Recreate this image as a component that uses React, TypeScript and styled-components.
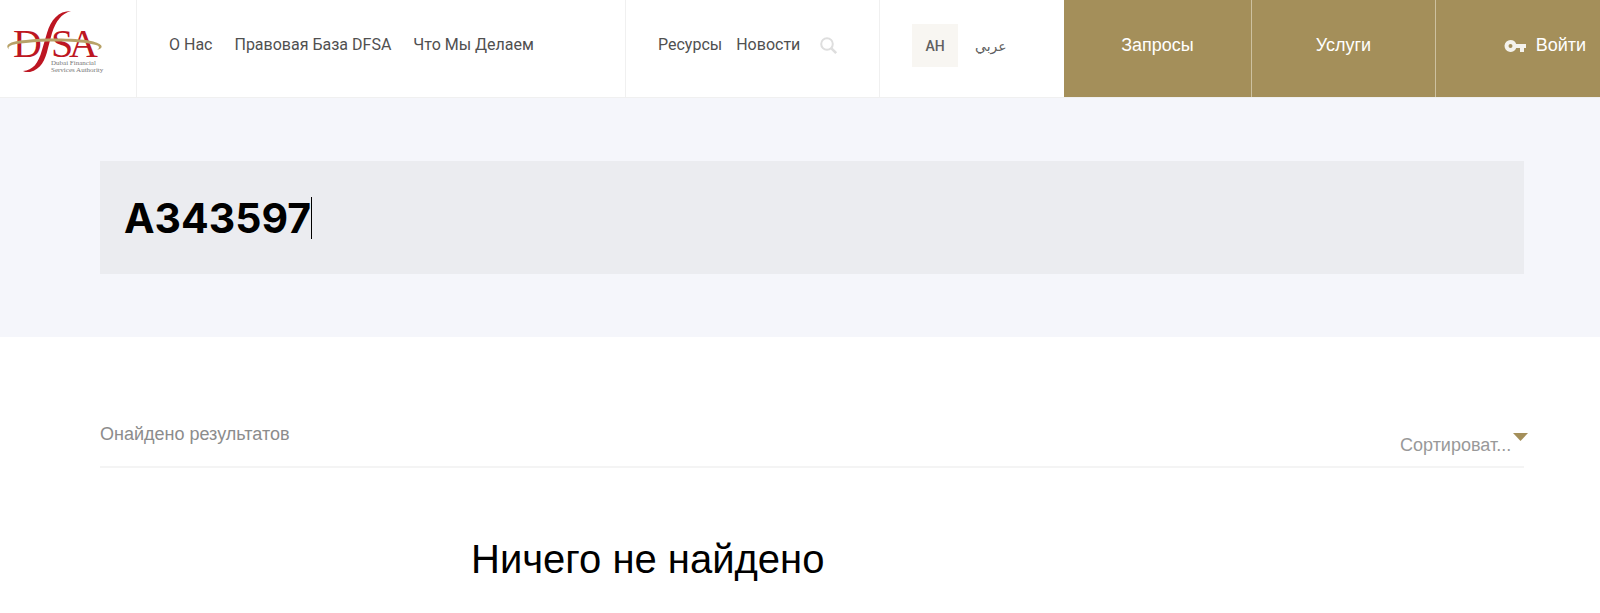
import React from "react";
import styled, { createGlobalStyle } from "styled-components";

const gold = "#a48f5a";
const line = "#f0f0f0";

const GlobalStyle = createGlobalStyle`
  *, *::before, *::after { box-sizing: border-box; }
  body {
    margin: 0;
    background: #fff;
    color: #000;
    font-family: "Liberation Sans", sans-serif;
  }
  a { color: inherit; text-decoration: none; }
`;

const Header = styled.header`
  display: flex;
  min-height: 98px;
  border-bottom: 1px solid ${line};
`;

const LogoLink = styled.a`
  display: block;
  flex: none;
  width: 137px;
  border-right: 1px solid ${line};
`;

const Nav = styled.nav<{ $grow?: boolean; $gap: number }>`
  display: flex;
  flex: ${(p) => (p.$grow ? "1 1 auto" : "0 0 254px")};
  gap: ${(p) => p.$gap}px;
  padding: 35px 0 0 32px;
  border-right: 1px solid ${line};
  white-space: nowrap;
`;

const NavLink = styled.a`
  font: 16px/20px Roboto, sans-serif;
  color: #505050;
`;

const SearchButton = styled.button`
  display: block;
  width: 18px;
  height: 20px;
  margin-left: 6px;
  padding: 2px 0 0;
  border: 0;
  background: none;
  cursor: pointer;
`;

const Languages = styled.div`
  display: flex;
  flex: 0 0 184px;
  gap: 17px;
  padding: 24px 0 0 32px;
`;

const Language = styled.a<{ $active?: boolean }>`
  display: flex;
  align-items: center;
  justify-content: center;
  height: 43px;
  min-width: ${(p) => (p.$active ? "46px" : "0")};
  background: ${(p) => (p.$active ? "#f8f6f2" : "transparent")};
  font: 500 14px/20px Roboto, "DejaVu Sans", sans-serif;
  color: #606060;
`;

const Action = styled.a<{ $basis: number; $end?: boolean }>`
  display: flex;
  flex: 0 0 ${(p) => p.$basis}px;
  justify-content: ${(p) => (p.$end ? "flex-end" : "center")};
  gap: 10px;
  padding: 35px ${(p) => (p.$end ? "14px" : "0")} 0 0;
  background: ${gold};
  color: #fff;
  font-size: 18px;
  line-height: 20px;
  & + & { border-left: 1px solid #cdc1a0; }
`;

const SearchBand = styled.form`
  padding: 63px 76px 63px 100px;
  background: #f5f6fb;
`;

const SearchField = styled.label`
  display: flex;
  align-items: center;
  height: 113px;
  padding: 0 24px;
  background: #ebecf0;
`;

const SearchInput = styled.input`
  field-sizing: content;
  min-width: 0;
  padding: 0;
  border: 0;
  outline: 0;
  background: none;
  color: #000;
  caret-color: transparent;
  font: 700 41px/50px Inter, sans-serif;
`;

const Caret = styled.span`
  width: 1px;
  height: 42px;
  background: #000;
`;

const Results = styled.main`
  padding: 84px 76px 0 100px;
`;

const ResultsBar = styled.div`
  display: flex;
  justify-content: space-between;
  height: 47px;
  border-bottom: 2px solid #f4f4f4;
`;

const Count = styled.p`
  margin: 0;
  padding-top: 3px;
  font-size: 18px;
  line-height: 20px;
  color: #8c8c8c;
`;

const SortControl = styled.label`
  display: flex;
  align-items: flex-start;
  gap: 1px;
  margin-right: -4px;
  padding-top: 12px;
`;

const SortSelect = styled.select`
  appearance: none;
  height: 24px;
  margin: 0;
  padding: 0;
  border: 0;
  outline: 0;
  background: none;
  color: #999;
  font: 18px/24px "Liberation Sans", sans-serif;
`;

const EmptyTitle = styled.h1`
  margin: 67px 0 0;
  padding-left: 371px;
  font-size: 40px;
  line-height: 48px;
  font-weight: 400;
`;

function Logo() {
  return (
    <svg width="110" height="80" viewBox="0 0 110 80" role="img" aria-label="DFSA">
      <g fill="#bd1622" fontFamily="Liberation Serif, serif" fontSize="40">
        <text x="13" y="57">D</text>
        <text x="51" y="57">S</text>
        <text x="69" y="57">A</text>
        <path d="M71 11C58 11 51 20 47 33L42 50C38 64 33 70 23 71C24 72 27 72 30 72C41 69 45 61 48 48L52 33C56 21 61 14 71 11Z" />
      </g>
      <path
        d="M10 50C4 46 8 41 26 40C46 38 75 38 91 41C104 44 104 48 97 50C101 47 99 45 91 44C75 41 46 41 26 43C10 44 6 47 10 50Z"
        fill="#b8a268"
      />
      <g fill="#777" fontFamily="Liberation Serif, serif" fontSize="7">
        <text x="51" y="65">Dubai Financial</text>
        <text x="51" y="72">Services Authority</text>
      </g>
    </svg>
  );
}

export default function App() {
  return (
    <>
      <GlobalStyle />
      <Header>
        <LogoLink href="#"><Logo /></LogoLink>
        <Nav $grow $gap={22}>
          <NavLink href="#">О Нас</NavLink>
          <NavLink href="#">Правовая База DFSA</NavLink>
          <NavLink href="#">Что Мы Делаем</NavLink>
        </Nav>
        <Nav $gap={14}>
          <NavLink href="#">Ресурсы</NavLink>
          <NavLink href="#">Новости</NavLink>
          <SearchButton type="button" aria-label="Поиск">
            <svg width="18" height="18" viewBox="0 0 18 18" fill="none" stroke="#dedede">
              <circle cx="7" cy="7" r="5.8" strokeWidth="2" />
              <path d="M11.4 11.4l4.8 4.8" strokeWidth="2.6" />
            </svg>
          </SearchButton>
        </Nav>
        <Languages>
          <Language href="#" $active>АН</Language>
          <Language href="#" lang="ar">عربي</Language>
        </Languages>
        <Action href="#" $basis={187}>Запросы</Action>
        <Action href="#" $basis={184}>Услуги</Action>
        <Action href="#" $basis={165} $end>
          <svg width="22" height="22" viewBox="0 0 22 22" fill="#f4f2ec" aria-hidden="true">
            <path fillRule="evenodd" d="M6.5 5a6 6 0 1 0 5.7 8H16v4h4v-4h2V9H12.200A6 6 0 0 0 6.500 5Zm0 4a2 2 0 1 1 0 4a2 2 0 0 1 0-4Z" />
          </svg>
          Войти
        </Action>
      </Header>
      <SearchBand onSubmit={(e) => e.preventDefault()}>
        <SearchField>
          <SearchInput type="text" aria-label="Поиск" defaultValue="A343597" />
          <Caret />
        </SearchField>
      </SearchBand>
      <Results>
        <ResultsBar>
          <Count>Онайдено результатов</Count>
          <SortControl>
            <SortSelect aria-label="Сортировать">
              <option>Сортироват...</option>
            </SortSelect>
            <svg width="15" height="8" viewBox="0 0 15 8" fill={gold} aria-hidden="true">
              <path d="M0 0h15L7.500 8z" />
            </svg>
          </SortControl>
        </ResultsBar>
        <EmptyTitle>Ничего не найдено</EmptyTitle>
      </Results>
    </>
  );
}
